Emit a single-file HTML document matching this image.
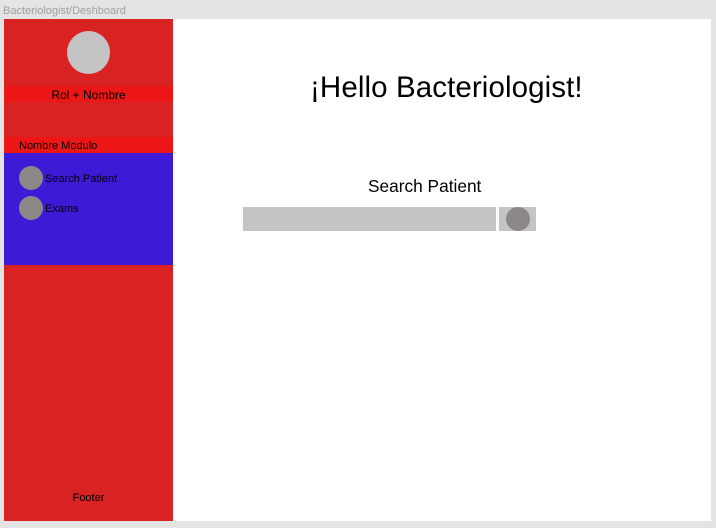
<!DOCTYPE html>
<html><head><style>
body{margin:0;width:716px;height:528px;background:#e4e4e4;position:relative;overflow:hidden;font-family:"Liberation Sans",sans-serif}
div{position:absolute;box-sizing:border-box}
.t{white-space:nowrap;color:#000}
</style></head><body>
<div class="t" style="left:3px;top:5px;font-size:11px;color:#a0a0a0">Bacteriologist/Deshboard</div>
<div style="left:4px;top:19px;width:707px;height:502px;background:#fff"></div>
<div style="left:4px;top:19px;width:169px;height:502px;background:#d92323"></div>
<div style="left:67px;top:31px;width:43px;height:43px;border-radius:50%;background:#c4c4c4"></div>
<div style="left:4px;top:86px;width:169px;height:16px;background:#ec1616"></div>
<div class="t" style="left:4px;top:87px;width:169px;text-align:center;font-size:12px;line-height:16px">Rol + Nombre</div>
<div style="left:4px;top:137px;width:169px;height:16px;background:#ec1616"></div>
<div class="t" style="left:19px;top:138px;font-size:11px;line-height:16px">Nombre Modulo</div>
<div style="left:4px;top:153px;width:169px;height:112px;background:#3d1ad6"></div>
<div style="left:19px;top:166px;width:24px;height:24px;border-radius:50%;background:#8d8888"></div>
<div class="t" style="left:45px;top:172px;font-size:11px;line-height:14px">Search Patient</div>
<div style="left:19px;top:196px;width:24px;height:24px;border-radius:50%;background:#8d8888"></div>
<div class="t" style="left:45px;top:202px;font-size:11px;line-height:14px">Exams</div>
<div class="t" style="left:4px;top:491px;width:169px;text-align:center;font-size:11px;line-height:14px">Footer</div>
<div class="t" style="left:310px;top:71px;font-size:29.5px;line-height:34px;letter-spacing:0.1px">¡Hello Bacteriologist!</div>
<div class="t" style="left:368px;top:176px;font-size:17.3px;line-height:20px">Search Patient</div>
<div style="left:243px;top:207px;width:253px;height:24px;background:#c4c4c4"></div>
<div style="left:499px;top:207px;width:37px;height:24px;background:#c4c4c4"></div>
<div style="left:506px;top:207px;width:24px;height:24px;border-radius:50%;background:#8d8888"></div>
</body></html>
